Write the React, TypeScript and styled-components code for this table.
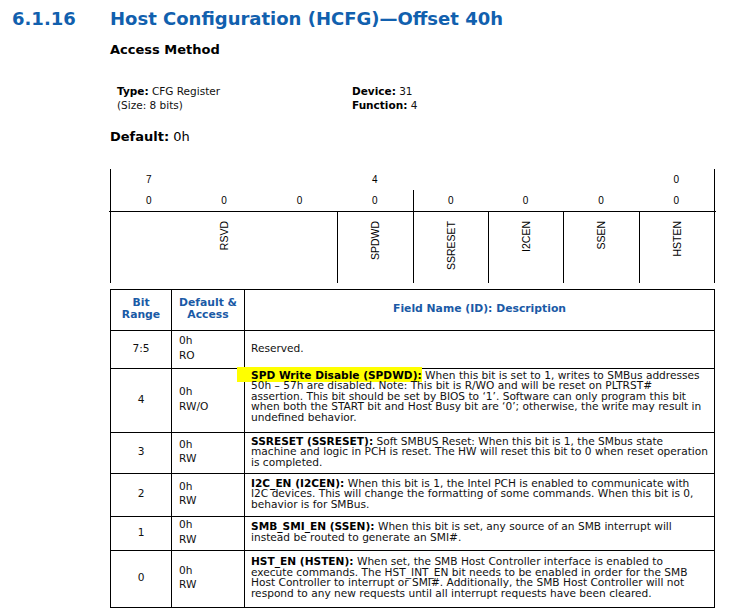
import React from "react";
import styled, { createGlobalStyle } from "styled-components";

const GlobalStyle = createGlobalStyle`
  html, body { margin: 0; padding: 0; background: #fff; }
  body { font-family: "DejaVu Sans", Verdana, sans-serif; color: #111; }
`;

const Page = styled.div`
  width: 741px;
  height: 612px;
  overflow: hidden;
  box-sizing: border-box;
  padding-top: 8px;
`;

const TitleRow = styled.h1`
  margin: 0;
  display: flex;
  font-size: 18px;
  line-height: 22px;
  font-weight: bold;
  color: #1160ae;
`;

const SectionNumber = styled.span`
  flex: 0 0 110px;
  box-sizing: border-box;
  padding-left: 12px;
`;

const Body = styled.div`
  margin-left: 110px;
`;

const SubHeading = styled.h2`
  margin: 11.5px 0 0;
  font-size: 13px;
  line-height: 16px;
  font-weight: bold;
  color: #000;
`;

const InfoGrid = styled.div`
  margin-top: 26.3px;
  padding-left: 7px;
  display: grid;
  grid-template-columns: 235px auto;
  font-size: 10.5px;
  line-height: 14px;
  color: #111;
`;

const Label = styled.b`
  font-weight: bold;
  color: #000;
`;

const DefaultLine = styled.div`
  margin-top: 17.6px;
  font-size: 13px;
  line-height: 16px;
  color: #000;
`;

const Diagram = styled.div`
  margin-top: 23.5px;
  width: 603px;
  border-left: 1px solid #000;
  border-right: 1px solid #000;
  font-family: "Liberation Sans", Arial, sans-serif;
  color: #000;
`;

const BitGrid = styled.div`
  display: grid;
  grid-template-columns: repeat(8, 1fr);
  grid-template-rows: 20px 21px;
  padding-top: 1px;
  margin: 0 -2px;
  padding-left: 2px;
  padding-right: 2px;
  border-bottom: 1px solid #000;
`;

const BitCell = styled.div<{ $divider?: boolean }>`
  display: flex;
  align-items: center;
  justify-content: center;
  font-size: 10px;
  border-left: ${(p) => (p.$divider ? "1px solid #000" : "none")};
`;

const FieldGrid = styled.div`
  display: grid;
  grid-template-columns: repeat(8, 1fr);
  height: 71px;
`;

const FieldCell = styled.div<{ $span: number; $first?: boolean }>`
  grid-column: span ${(p) => p.$span};
  display: flex;
  justify-content: center;
  align-items: flex-start;
  padding-top: 9px;
  border-left: ${(p) => (p.$first ? "none" : "1px solid #000")};
`;

const FieldLabel = styled.span`
  writing-mode: vertical-rl;
  transform: rotate(180deg);
  font-size: 10.5px;
  line-height: 12px;
`;

const RegTable = styled.table`
  margin-top: 6px;
  border-collapse: collapse;
  table-layout: fixed;
  width: 604px;
  border: 1px solid #000;
`;

const HeadCell = styled.th<{ $w: number }>`
  width: ${(p) => p.$w}px;
  height: 39px;
  padding: 0 0 1px;
  border: 1px solid #000;
  color: #1a5aa6;
  font-size: 10.8px;
  line-height: 12.5px;
  font-weight: bold;
  text-align: center;
  vertical-align: middle;
`;

const Row = styled.tr<{ $h: number }>`
  height: ${(p) => p.$h}px;
`;

const Cell = styled.td<{ $align?: "center" | "left"; $pl?: number; $pb?: number }>`
  border: 1px solid #000;
  padding: 0 0 ${(p) => p.$pb ?? 3}px ${(p) => p.$pl ?? 0}px;
  text-align: ${(p) => p.$align ?? "left"};
  vertical-align: middle;
  font-size: 10.6px;
  color: #111;
`;

const AccessLines = styled.div`
  line-height: 14.5px;
`;

const Desc = styled.div`
  line-height: 10.5px;
  white-space: nowrap;
`;

const DescLine = styled.div``;

const FieldName = styled.b<{ $hl?: boolean }>`
  font-weight: bold;
  color: #000;
  ${(p) =>
    p.$hl
      ? `background: #ffff00; padding: 2px 0 1.5px 14px; margin-left: -14px;`
      : ""}
`;

type Reg = {
  bits: string;
  def: string;
  access: string;
  name: string;
  hl?: boolean;
  lines: string[];
  h: number;
  descPb?: number;
};

const rows: Reg[] = [
  { bits: "7:5", def: "0h", access: "RO", name: "", lines: ["Reserved."], h: 38 },
  {
    bits: "4",
    def: "0h",
    access: "RW/O",
    name: "SPD Write Disable (SPDWD):",
    hl: true,
    h: 64,
    descPb: 9,
    lines: [
      " When this bit is set to 1, writes to SMBus addresses",
      "50h – 57h are disabled. Note: This bit is R/WO and will be reset on PLTRST#",
      "assertion. This bit should be set by BIOS to ‘1’. Software can only program this bit",
      "when both the START bit and Host Busy bit are ‘0’; otherwise, the write may result in",
      "undefined behavior.",
    ],
  },
  {
    bits: "3",
    def: "0h",
    access: "RW",
    name: "SSRESET (SSRESET):",
    h: 41,
    lines: [
      " Soft SMBUS Reset: When this bit is 1, the SMbus state",
      "machine and logic in PCH is reset. The HW will reset this bit to 0 when reset operation",
      "is completed.",
    ],
  },
  {
    bits: "2",
    def: "0h",
    access: "RW",
    name: "I2C_EN (I2CEN):",
    h: 43,
    lines: [
      " When this bit is 1, the Intel PCH is enabled to communicate with",
      "I2C devices. This will change the formatting of some commands. When this bit is 0,",
      "behavior is for SMBus.",
    ],
  },
  {
    bits: "1",
    def: "0h",
    access: "RW",
    name: "SMB_SMI_EN (SSEN):",
    h: 34,
    lines: [
      " When this bit is set, any source of an SMB interrupt will",
      "instead be routed to generate an SMI#.",
    ],
  },
  {
    bits: "0",
    def: "0h",
    access: "RW",
    name: "HST_EN (HSTEN):",
    h: 57,
    lines: [
      " When set, the SMB Host Controller interface is enabled to",
      "execute commands. The HST_INT_EN bit needs to be enabled in order for the SMB",
      "Host Controller to interrupt or SMI#. Additionally, the SMB Host Controller will not",
      "respond to any new requests until all interrupt requests have been cleared.",
    ],
  },
];

const topDigits = ["7", "", "", "4", "", "", "", "0"];
const fields: { label: string; span: number }[] = [
  { label: "RSVD", span: 3 },
  { label: "SPDWD", span: 1 },
  { label: "SSRESET", span: 1 },
  { label: "I2CEN", span: 1 },
  { label: "SSEN", span: 1 },
  { label: "HSTEN", span: 1 },
];

export default function App() {
  return (
    <Page>
      <GlobalStyle />
      <TitleRow>
        <SectionNumber>6.1.16</SectionNumber>
        <span>Host Configuration (HCFG)—Offset 40h</span>
      </TitleRow>
      <Body>
        <SubHeading>Access Method</SubHeading>
        <InfoGrid>
          <div>
            <Label>Type:</Label> CFG Register
          </div>
          <div>
            <Label>Device:</Label> 31
          </div>
          <div>(Size: 8 bits)</div>
          <div>
            <Label>Function:</Label> 4
          </div>
        </InfoGrid>
        <DefaultLine>
          <Label>Default:</Label> 0h
        </DefaultLine>
        <Diagram>
          <BitGrid>
            {topDigits.map((d, i) => (
              <BitCell key={"t" + i}>{d}</BitCell>
            ))}
            {topDigits.map((_, i) => (
              <BitCell key={"v" + i} $divider={i === 4}>
                0
              </BitCell>
            ))}
          </BitGrid>
          <FieldGrid>
            {fields.map((f, i) => (
              <FieldCell key={f.label} $span={f.span} $first={i === 0}>
                <FieldLabel>{f.label}</FieldLabel>
              </FieldCell>
            ))}
          </FieldGrid>
        </Diagram>
        <RegTable>
          <thead>
            <tr>
              <HeadCell $w={60}>
                Bit
                <br />
                Range
              </HeadCell>
              <HeadCell $w={72}>
                Default &amp;
                <br />
                Access
              </HeadCell>
              <HeadCell $w={469}>Field Name (ID): Description</HeadCell>
            </tr>
          </thead>
          <tbody>
            {rows.map((r) => (
              <Row key={r.bits} $h={r.h}>
                <Cell $align="center">{r.bits}</Cell>
                <Cell $pl={7}>
                  <AccessLines>
                    {r.def}
                    <br />
                    {r.access}
                  </AccessLines>
                </Cell>
                <Cell $pl={6} $pb={r.descPb}>
                  <Desc>
                    {r.lines.map((l, i) => (
                      <DescLine key={i}>
                        {i === 0 && r.name ? <FieldName $hl={r.hl}>{r.name}</FieldName> : null}
                        {l}
                      </DescLine>
                    ))}
                  </Desc>
                </Cell>
              </Row>
            ))}
          </tbody>
        </RegTable>
      </Body>
    </Page>
  );
}
